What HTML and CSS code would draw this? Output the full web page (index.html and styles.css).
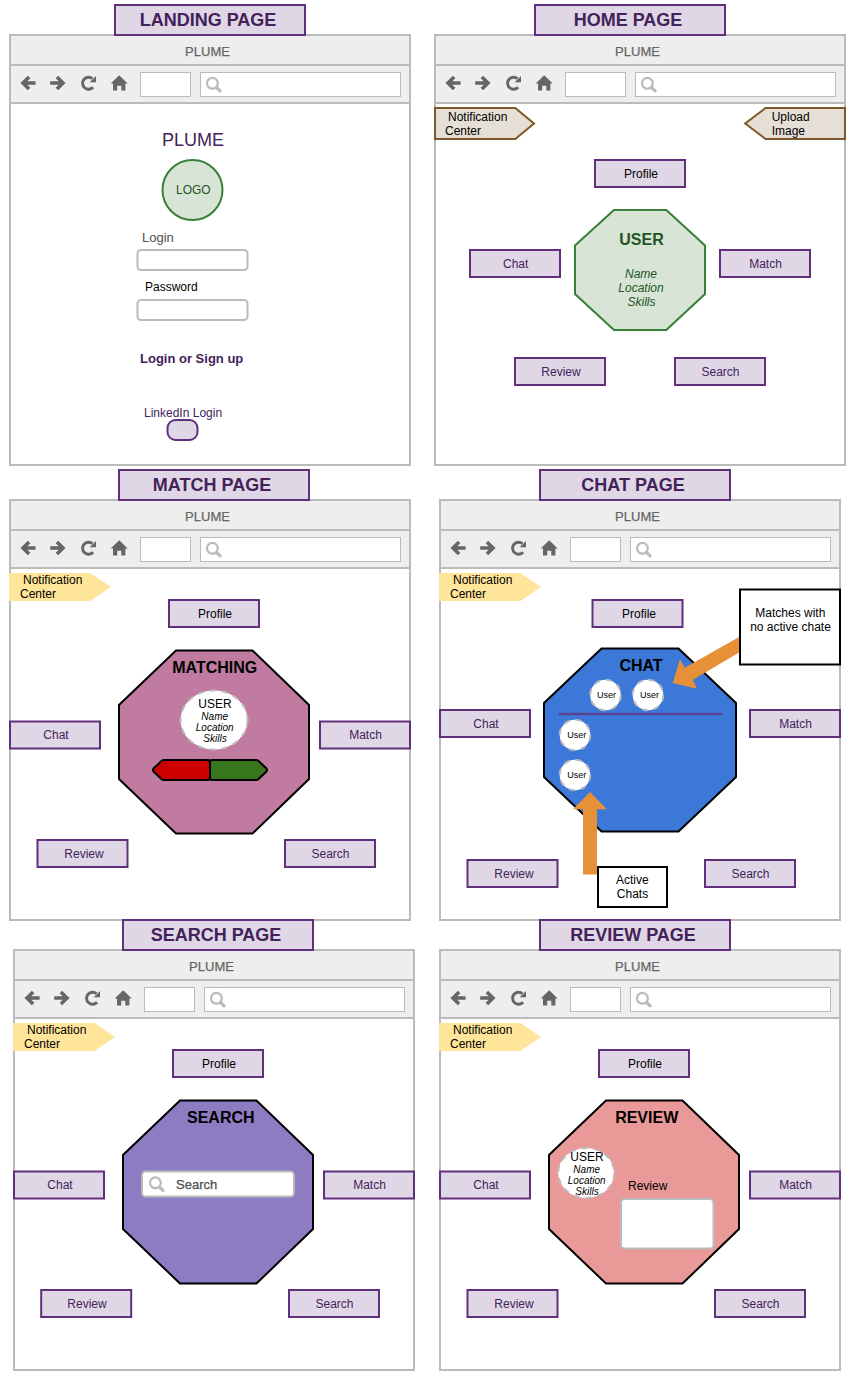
FILE: index.html
```html
<!DOCTYPE html>
<html lang="en">
<head>
<meta charset="utf-8">
<title>Plume wireframes</title>
<link rel="stylesheet" href="styles.css">
</head>
<body>
<svg class="defs" width="0" height="0" aria-hidden="true">
  <symbol id="back" viewBox="0 0 20 20"><path class="arrow" d="M11.1 3.9 5 10l6.1 6.1M5.500 10H17.600"/></symbol>
  <symbol id="forward" viewBox="0 0 20 20"><path class="arrow" d="M8.900 3.900 15 10l-6.100 6.100M2.200 10H14.500"/></symbol>
  <symbol id="reload" viewBox="0 0 20 20"><path class="ring" d="M15.100 14.200A6 6 0 1 1 14.500 5.700"/><path class="solid" d="M18 2.900v6.300h-6.300z"/></symbol>
  <symbol id="house" viewBox="0 0 20 20"><path class="solid" d="M11.2 2.3 19.7 10.5H17.4V17.6H13.3V12.8H9.2V17.6H5V10.5H2.7z"/></symbol>
  <symbol id="lens" viewBox="0 0 18 18"><circle class="glass" cx="7.4" cy="7.3" r="5.4"/><path class="handle" d="M11.9 11.8l3.2 3.1"/></symbol>
</svg>

<main class="board">
  <section class="page landing">
    <h2 class="title">LANDING PAGE</h2>
    <div class="frame">
      <div class="window">
        <div class="titlebar">PLUME</div>
        <div class="toolbar">
          <svg class="icon"><use href="#back"/></svg><svg class="icon"><use href="#forward"/></svg><svg class="icon"><use href="#reload"/></svg><svg class="icon"><use href="#house"/></svg>
          <div class="tab"></div>
          <div class="address"><svg class="lens"><use href="#lens"/></svg></div>
        </div>
      </div>
      <svg class="stage" viewBox="9 34 402 432">
        <text class="brand" x="162" y="146">PLUME</text>
        <circle class="green" cx="192.5" cy="190" r="30"/>
        <text class="leaf" x="176" y="194">LOGO</text>
        <text class="field-label" x="142" y="242">Login</text>
        <rect class="field" x="137.5" y="250" width="110" height="20" rx="3.5"/>
        <text x="145" y="291">Password</text>
        <rect class="field" x="137.5" y="300" width="110" height="20" rx="3.5"/>
        <text class="signup" x="140" y="363">Login or Sign up</text>
        <text class="plum" x="144" y="417">LinkedIn Login</text>
        <rect class="node" x="167.5" y="420" width="30" height="20" rx="8"/>
      </svg>
    </div>
  </section>

  <section class="page home">
    <h2 class="title">HOME PAGE</h2>
    <div class="frame">
      <div class="window">
        <div class="titlebar">PLUME</div>
        <div class="toolbar">
          <svg class="icon"><use href="#back"/></svg><svg class="icon"><use href="#forward"/></svg><svg class="icon"><use href="#reload"/></svg><svg class="icon"><use href="#house"/></svg>
          <div class="tab"></div>
          <div class="address"><svg class="lens"><use href="#lens"/></svg></div>
        </div>
      </div>
      <svg class="stage" viewBox="434 34 412 432">
        <path class="tan" d="M435 108H515.3L534 123.500 515.300 139H435z"/>
        <text x="448" y="121">Notification</text><text x="445" y="135">Center</text>
        <path class="tan" d="M845 108H765.500L745.200 123.500 765.500 139H845z"/>
        <text x="771.700" y="121">Upload</text><text x="771.700" y="135">Image</text>
        <rect class="node" x="595" y="160" width="90" height="27"/><text class="mid" x="641" y="178">Profile</text>
        <rect class="node" x="470" y="250" width="90" height="27"/><text class="mid plum" x="515.700" y="268">Chat</text>
        <rect class="node" x="720" y="250" width="90" height="27"/><text class="mid plum" x="765.500" y="268">Match</text>
        <rect class="node" x="515" y="358" width="90" height="27"/><text class="mid plum" x="561" y="376">Review</text>
        <rect class="node" x="675" y="358" width="90" height="27"/><text class="mid plum" x="720.500" y="376">Search</text>
        <path class="green" d="M614 210H666.300L705 245.500V294L666.300 330H614L575 294V245.500z"/>
        <text class="mid heading leaf" x="641.500" y="245">USER</text>
        <text class="mid slant leaf" x="641" y="278">Name</text>
        <text class="mid slant leaf" x="641" y="292">Location</text>
        <text class="mid slant leaf" x="641.500" y="306">Skills</text>
      </svg>
    </div>
  </section>

  <section class="page match">
    <h2 class="title">MATCH PAGE</h2>
    <div class="frame">
      <div class="window">
        <div class="titlebar">PLUME</div>
        <div class="toolbar">
          <svg class="icon"><use href="#back"/></svg><svg class="icon"><use href="#forward"/></svg><svg class="icon"><use href="#reload"/></svg><svg class="icon"><use href="#house"/></svg>
          <div class="tab"></div>
          <div class="address"><svg class="lens"><use href="#lens"/></svg></div>
        </div>
      </div>
      <svg class="stage" viewBox="9 499 402 422">
        <path class="flag" d="M9 573H90L111 587 90 601H9z"/>
        <text x="23" y="584">Notification</text><text x="20" y="598">Center</text>
        <rect class="node" x="169" y="600" width="90" height="27"/><text class="mid" x="215" y="618">Profile</text>
        <rect class="node" x="10" y="721.5" width="90" height="27"/><text class="mid plum" x="56" y="739">Chat</text>
        <rect class="node" x="320" y="721.5" width="90" height="27"/><text class="mid plum" x="365.5" y="739">Match</text>
        <rect class="node" x="37.5" y="840" width="90" height="27"/><text class="mid plum" x="84" y="858">Review</text>
        <rect class="node" x="285" y="840" width="90" height="27"/><text class="mid plum" x="330.5" y="858">Search</text>
        <path class="octagon pink" d="M176 650.5H252.500L309 705V779L252.500 833.500H176L119 779V705z"/>
        <text class="mid heading" x="214.800" y="673">MATCHING</text>
        <ellipse class="avatar" cx="214" cy="720" rx="33.500" ry="29.500"/>
        <text class="mid" x="215" y="708">USER</text>
        <text class="mid tiny slant" x="214.700" y="720">Name</text>
        <text class="mid tiny slant" x="214.700" y="731">Location</text>
        <text class="mid tiny slant" x="215" y="742">Skills</text>
        <path class="choice reject" d="M162 760.500Q162.500 760 164 760H208Q210 760 210 762V778Q210 780 208 780H164Q162.500 780 162 779.500L153.500 771.500Q152.500 770 153.500 768.500z"/>
        <path class="choice accept" d="M258 760.500Q257.500 760 256 760H212Q210 760 210 762V778Q210 780 212 780H256Q257.500 780 258 779.500L266.500 771.500Q267.500 770 266.500 768.500z"/>
      </svg>
    </div>
  </section>

  <section class="page chat">
    <h2 class="title">CHAT PAGE</h2>
    <div class="frame">
      <div class="window">
        <div class="titlebar">PLUME</div>
        <div class="toolbar">
          <svg class="icon"><use href="#back"/></svg><svg class="icon"><use href="#forward"/></svg><svg class="icon"><use href="#reload"/></svg><svg class="icon"><use href="#house"/></svg>
          <div class="tab"></div>
          <div class="address"><svg class="lens"><use href="#lens"/></svg></div>
        </div>
      </div>
      <svg class="stage" viewBox="439 499 402 422">
        <path class="flag" d="M439 573H520.500L541 587 520.500 601H439z"/>
        <text x="453" y="584">Notification</text><text x="450" y="598">Center</text>
        <rect class="node" x="592.500" y="600" width="90" height="27"/><text class="mid" x="639" y="618">Profile</text>
        <rect class="node" x="440" y="710" width="90" height="27"/><text class="mid plum" x="486" y="728">Chat</text>
        <rect class="node" x="750" y="710" width="90" height="27"/><text class="mid plum" x="795.500" y="728">Match</text>
        <rect class="node" x="467.500" y="860" width="90" height="27"/><text class="mid plum" x="514" y="878">Review</text>
        <rect class="node" x="705" y="860" width="90" height="27"/><text class="mid plum" x="750.500" y="878">Search</text>
        <path class="octagon blue" d="M601.500 648.500H678.500L736 703V777L678.500 831.500H601.500L544 777V703z"/>
        <text class="mid heading" x="641" y="671">CHAT</text>
        <circle class="avatar" cx="605.500" cy="695" r="15.300"/><text class="mid micro" x="606.500" y="698">User</text>
        <circle class="avatar" cx="648" cy="695" r="15.300"/><text class="mid micro" x="649.500" y="698">User</text>
        <path class="divider" d="M558.500 714H722"/>
        <circle class="avatar" cx="575" cy="735" r="15.300"/><text class="mid micro" x="576.700" y="738">User</text>
        <circle class="avatar" cx="575" cy="775" r="15.300"/><text class="mid micro" x="576.700" y="778">User</text>
        <path class="pointer" d="M672.700 683 680 659.300 684.700 667.700 740 636.500V652L693 679.700 697 688.700z"/>
        <path class="pointer" d="M590 792 607 809.300H597V874.500H583V809.300H573z"/>
        <rect class="note" x="740" y="589.500" width="100" height="75"/>
        <text class="mid" x="790.300" y="617">Matches with</text><text class="mid" x="790.500" y="631">no active chate</text>
        <rect class="note" x="598" y="867" width="69" height="40"/>
        <text class="mid" x="632.300" y="884">Active</text><text class="mid" x="632.500" y="898">Chats</text>
      </svg>
    </div>
  </section>

  <section class="page search">
    <h2 class="title">SEARCH PAGE</h2>
    <div class="frame">
      <div class="window">
        <div class="titlebar">PLUME</div>
        <div class="toolbar">
          <svg class="icon"><use href="#back"/></svg><svg class="icon"><use href="#forward"/></svg><svg class="icon"><use href="#reload"/></svg><svg class="icon"><use href="#house"/></svg>
          <div class="tab"></div>
          <div class="address"><svg class="lens"><use href="#lens"/></svg></div>
        </div>
      </div>
      <svg class="stage" viewBox="13 949 402 422">
        <path class="flag" d="M13 1023H94.500L115 1037 94.500 1051H13z"/>
        <text x="27" y="1034">Notification</text><text x="24" y="1048">Center</text>
        <rect class="node" x="173" y="1050" width="90" height="27"/><text class="mid" x="219" y="1068">Profile</text>
        <rect class="node" x="14" y="1171.500" width="90" height="27"/><text class="mid plum" x="60" y="1189">Chat</text>
        <rect class="node" x="324" y="1171.500" width="90" height="27"/><text class="mid plum" x="369.500" y="1189">Match</text>
        <rect class="node" x="41.200" y="1290" width="90" height="27"/><text class="mid plum" x="87" y="1308">Review</text>
        <rect class="node" x="289" y="1290" width="90" height="27"/><text class="mid plum" x="334.500" y="1308">Search</text>
        <path class="octagon violet" d="M180 1100.500H256.500L313 1155V1229L256.500 1283.500H180L123 1229V1155z"/>
        <text class="mid heading" x="220.800" y="1123">SEARCH</text>
        <rect class="field" x="142" y="1171.500" width="152" height="25" rx="3.500"/>
        <use href="#lens" x="148" y="1175.500" width="18" height="18"/>
        <text class="field-label dense" x="176" y="1189">Search</text>
      </svg>
    </div>
  </section>

  <section class="page review">
    <h2 class="title">REVIEW PAGE</h2>
    <div class="frame">
      <div class="window">
        <div class="titlebar">PLUME</div>
        <div class="toolbar">
          <svg class="icon"><use href="#back"/></svg><svg class="icon"><use href="#forward"/></svg><svg class="icon"><use href="#reload"/></svg><svg class="icon"><use href="#house"/></svg>
          <div class="tab"></div>
          <div class="address"><svg class="lens"><use href="#lens"/></svg></div>
        </div>
      </div>
      <svg class="stage" viewBox="439 949 402 422">
        <path class="flag" d="M439 1023H520.500L541 1037 520.500 1051H439z"/>
        <text x="453" y="1034">Notification</text><text x="450" y="1048">Center</text>
        <rect class="node" x="599" y="1050" width="90" height="27"/><text class="mid" x="645" y="1068">Profile</text>
        <rect class="node" x="440" y="1171.500" width="90" height="27"/><text class="mid plum" x="486" y="1189">Chat</text>
        <rect class="node" x="750" y="1171.500" width="90" height="27"/><text class="mid plum" x="795.500" y="1189">Match</text>
        <rect class="node" x="467.500" y="1290" width="90" height="27"/><text class="mid plum" x="514" y="1308">Review</text>
        <rect class="node" x="715" y="1290" width="90" height="27"/><text class="mid plum" x="760.500" y="1308">Search</text>
        <path class="octagon salmon" d="M606 1100.500H682.500L739 1155V1229L682.500 1283.500H606L549 1229V1155z"/>
        <text class="mid heading" x="646.700" y="1123">REVIEW</text>
        <ellipse class="avatar" cx="586.200" cy="1173" rx="28" ry="25"/>
        <text class="mid" x="587" y="1161">USER</text>
        <text class="mid tiny slant" x="586.700" y="1173">Name</text>
        <text class="mid tiny slant" x="586.700" y="1184">Location</text>
        <text class="mid tiny slant" x="587" y="1195">Skills</text>
        <text x="628" y="1190">Review</text>
        <rect class="field" x="621" y="1199" width="92.500" height="49.500" rx="3.500"/>
      </svg>
    </div>
  </section>
</main>
</body>
</html>
```
FILE: styles.css
```css
* { box-sizing: border-box; }

body {
  margin: 0;
  background: #fff;
  color: #000;
  font-family: "Liberation Sans", Arial, Helvetica, sans-serif;
}

.defs { position: absolute; }

/* Board: two columns of wireframes */
.board {
  display: grid;
  grid-template-columns: 430px 437px;
  grid-template-rows: 465px 450px 471px;
  padding-top: 4px;
  height: 1390px;
}

.page {
  --frame-width: 402px;
  --frame-height: 422px;
  display: flex;
  flex-direction: column;
  align-items: flex-start;
  padding-left: 9px;
}
.landing { --frame-height: 432px; }
.home { --frame-width: 412px; --frame-height: 432px; padding-left: 4px; }
.search { padding-left: 13px; }

.title {
  position: relative;
  z-index: 1;
  flex: none;
  width: 192px;
  height: 32px;
  margin: 0 0 -2px 100px;
  padding-right: 4px;
  border: 2px solid #60307d;
  background: #dfd7e6;
  color: #432259;
  font-size: 18px;
  line-height: 28px;
  font-weight: bold;
  text-align: center;
}
.landing .title { margin-left: 105px; }
.match .title, .search .title { margin-left: 109px; }

.frame {
  position: relative;
  flex: none;
  width: var(--frame-width);
  height: var(--frame-height);
}

/* Browser window */
.window {
  height: 100%;
  border: 2px solid #bbb;
}
.titlebar {
  height: 30px;
  padding-right: 5px;
  border-bottom: 2px solid #bbb;
  background: #eee;
  color: #666;
  font-size: 13px;
  line-height: 31px;
  text-align: center;
  -webkit-text-stroke: 0.25px #666;
}
.toolbar {
  display: flex;
  align-items: flex-start;
  height: 38px;
  padding: 6px 8px 0 7px;
  border-bottom: 2px solid #bbb;
  background: #eee;
}
.icon {
  flex: none;
  width: 20px;
  height: 20px;
  margin: 1px 10px 0 0;
}
.tab, .address {
  height: 25px;
  border: 1px solid #bbb;
  background: #fff;
}
.tab { flex: 1; margin: 0 9px 0 2px; }
.address { flex: none; width: 201px; padding: 3px 0 0 4px; }
.lens { display: block; width: 18px; height: 18px; }

.arrow { fill: none; stroke: #666; stroke-width: 3.6; stroke-linejoin: miter; }
.ring { fill: none; stroke: #666; stroke-width: 2.9; }
.solid { fill: #666; }
.glass { fill: none; stroke: #bbb; stroke-width: 2.2; }
.handle { fill: none; stroke: #bbb; stroke-width: 3.2; stroke-linecap: round; }

/* Diagram drawn over each window */
.stage {
  position: absolute;
  inset: 0;
  width: 100%;
  height: 100%;
  font-size: 12px;
}
.mid { text-anchor: middle; }
.slant { font-style: italic; }
.tiny { font-size: 10px; }
.micro { font-size: 9px; }
.heading { font-size: 16px; font-weight: bold; }
.brand { fill: #432259; font-size: 18px; }
.signup { fill: #432259; font-size: 13px; font-weight: bold; }
.field-label { fill: #4d4d4d; font-size: 13px; }
.dense { stroke: #4d4d4d; stroke-width: 0.25; }
.plum { fill: #432259; }
.leaf { fill: #235423; }

.node { fill: #dfd7e6; stroke: #60307d; stroke-width: 2; }
.green { fill: #d8e4d6; stroke: #378037; stroke-width: 2; }
.tan { fill: #e6dfd6; stroke: #7d5a2b; stroke-width: 2; }
.flag { fill: #ffe599; }
.field { fill: #fff; stroke: #bbb; stroke-width: 2; }
.note { fill: #fff; stroke: #000; stroke-width: 2; }
.octagon { stroke: #000; stroke-width: 2; }
.pink { fill: #c27ba0; }
.blue { fill: #3c78d8; }
.violet { fill: #8e7cc3; }
.salmon { fill: #ea9999; }
.avatar { fill: #fff; stroke: #bbb; stroke-width: 2; stroke-dasharray: 6 6; }
.choice { stroke: #000; stroke-width: 2; }
.reject { fill: #c00; }
.accept { fill: #38761d; }
.divider { stroke: #5b4394; stroke-width: 2.4; }
.pointer { fill: #e69138; }
```
